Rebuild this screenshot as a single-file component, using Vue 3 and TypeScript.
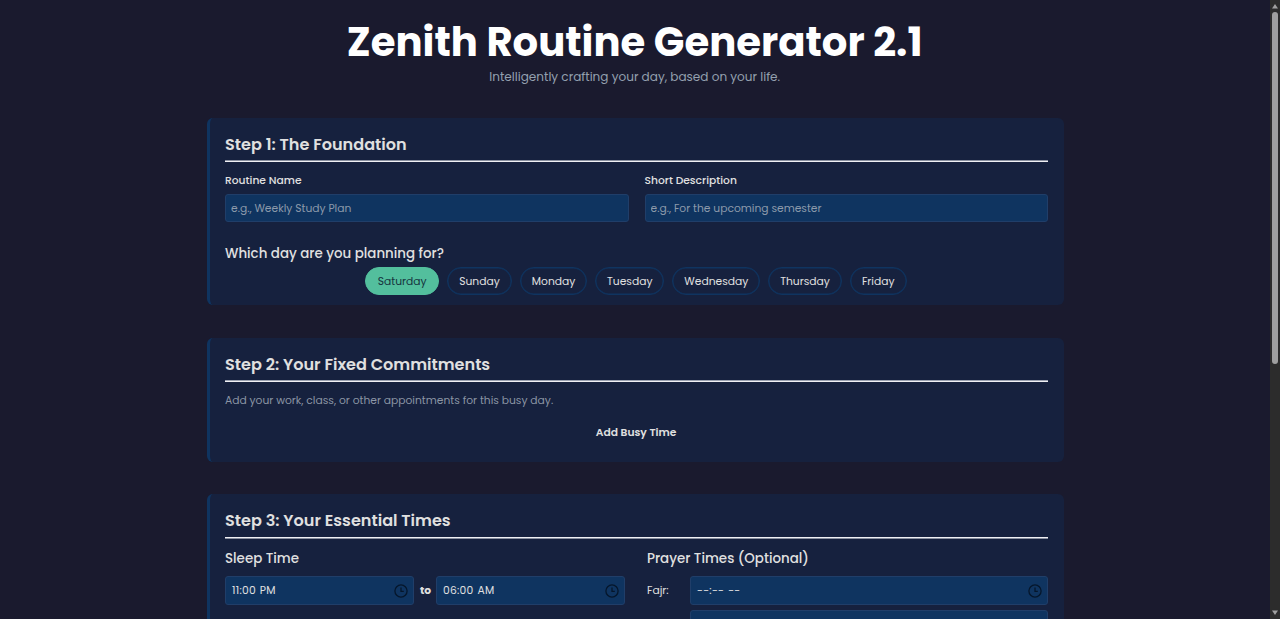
<script setup lang="ts">
import { ref } from 'vue'

interface Day {
  name: string
  width: number
}

const days: Day[] = [
  { name: 'Saturday', width: 73.5 },
  { name: 'Sunday', width: 64.8 },
  { name: 'Monday', width: 67.3 },
  { name: 'Tuesday', width: 68.9 },
  { name: 'Wednesday', width: 88 },
  { name: 'Thursday', width: 73.3 },
  { name: 'Friday', width: 57 },
]
const selected = ref('Saturday')
const routineName = ref('')
const description = ref('')
</script>

<template>
  <div class="window">
    <main class="page">
      <header class="hero">
        <h1>Zenith Routine Generator 2.1</h1>
        <p>Intelligently crafting your day, based on your life.</p>
      </header>

      <section class="card card-foundation">
        <h2>Step 1: The Foundation</h2>
        <div class="fields">
          <label class="field">
            <span class="label">Routine Name</span>
            <input v-model="routineName" placeholder="e.g., Weekly Study Plan" />
          </label>
          <label class="field">
            <span class="label">Short Description</span>
            <input v-model="description" placeholder="e.g., For the upcoming semester" />
          </label>
        </div>
        <h3 class="question">Which day are you planning for?</h3>
        <div class="days">
          <button
            v-for="day in days"
            :key="day.name"
            class="day"
            :class="{ active: day.name === selected }"
            :style="{ width: day.width + 'px' }"
            @click="selected = day.name"
          >{{ day.name }}</button>
        </div>
      </section>

      <section class="card card-busy">
        <h2>Step 2: Your Fixed Commitments</h2>
        <p class="hint">Add your work, class, or other appointments for this busy day.</p>
        <button class="add">Add Busy Time</button>
      </section>

      <section class="card card-times">
        <h2>Step 3: Your Essential Times</h2>
        <div class="times">
          <div class="sleep">
            <h3>Sleep Time</h3>
            <div class="range">
              <div class="time"><span>11:00 PM</span><svg class="clock" viewBox="0 0 14 14"><circle cx="7" cy="7" r="6.1" /><path d="M7 3.4V7.4H9.8" /></svg></div>
              <strong>to</strong>
              <div class="time"><span>06:00 AM</span><svg class="clock" viewBox="0 0 14 14"><circle cx="7" cy="7" r="6.1" /><path d="M7 3.4V7.4H9.8" /></svg></div>
            </div>
          </div>
          <div class="prayer">
            <h3>Prayer Times (Optional)</h3>
            <div class="prayer-row">
              <span class="prayer-name">Fajr:</span>
              <div class="time"><span>--:-- --</span><svg class="clock" viewBox="0 0 14 14"><circle cx="7" cy="7" r="6.1" /><path d="M7 3.4V7.4H9.8" /></svg></div>
            </div>
            <div class="prayer-row">
              <span class="prayer-name"></span>
              <div class="time"></div>
            </div>
          </div>
        </div>
      </section>
    </main>
    <aside class="scrollbar">
      <svg viewBox="0 0 10 12"><path d="M5 4L8 8.5H2Z" /></svg>
      <div class="thumb"></div>
      <svg class="down" viewBox="0 0 10 12"><path d="M5 8L8 3.5H2Z" /></svg>
    </aside>
  </div>
</template>

<style>
html,
body {
  margin: 0;
  background: #1a1a2e;
  overflow: hidden;
}
</style>

<style scoped>
* {
  box-sizing: border-box;
}
.window {
  display: flex;
  height: 619px;
  overflow: hidden;
  background: #1a1a2e;
  color: #e0e0e0;
  font-family: Poppins, Inter, sans-serif;
  font-size: 10.72px;
  white-space: nowrap;
}
.page {
  width: 1270px;
  padding: 0 206px 0 207px;
}
h1,
h2,
h3,
p {
  margin: 0;
}
.hero {
  height: 118px;
  padding: 17px 1.6px 0 0;
  text-align: center;
}
h1 {
  height: 50px;
  line-height: 50px;
  font-size: 40.2px;
  font-weight: 700;
  color: #fff;
}
.hero p {
  height: 18px;
  line-height: 20px;
  font-size: 12.06px;
  color: #94a0af;
}
.card {
  border-left: 3px solid #0f3460;
  border-radius: 6px;
  background: #16213e;
  padding: 16px 16px 0 15px;
}
.card-foundation {
  height: 187px;
  margin-bottom: 33px;
}
.card-busy {
  height: 124px;
  margin-bottom: 32px;
}
.card-times {
  height: 250px;
}
h2 {
  height: 28px;
  line-height: 22px;
  border-bottom: 1px solid #f0f0f4;
  font-size: 16.08px;
  font-weight: 600;
}
.card-foundation h2 {
  box-shadow: 0 -1px #8990a0 inset;
}
.card-busy h2 {
  box-shadow: 0 -1px #9ba2b1 inset;
}
.card-times h2 {
  box-shadow: 0 1px #8990a0;
}
.fields {
  display: grid;
  grid-template-columns: 1fr 1fr;
  gap: 16px;
  margin-top: 10px;
}
.field {
  display: flex;
  flex-direction: column;
}
.label {
  height: 22px;
  line-height: 17px;
  font-weight: 500;
}
input {
  width: 100%;
  height: 28px;
  padding: 1px 5px 0;
  border: 1px solid #203e69;
  border-radius: 3px;
  outline: none;
  background: #0f3460;
  color: #e0e0e0;
  font: 10.72px Poppins, Inter, sans-serif;
}
input::placeholder {
  color: #8c9aab;
  opacity: 1;
}
h3 {
  font-size: 13.4px;
  font-weight: 500;
}
.question {
  height: 22px;
  margin-top: 22px;
  line-height: 20px;
}
.days {
  display: flex;
  justify-content: center;
  gap: 8.1px;
  margin-top: 1px;
  padding-right: 0.8px;
}
.day {
  height: 28.4px;
  padding: 1px 0 0;
  border: 1px solid #0f3460;
  border-radius: 15px;
  box-shadow: inset 0 0 0 0.5px #0f3460;
  background: transparent;
  color: #e0e0e0;
  font: 10.72px Poppins, Inter, sans-serif;
}
.day.active {
  border-color: #53bf9d;
  box-shadow: none;
  background: #53bf9d;
  color: #16343e;
}
.hint {
  margin-top: 10px;
  line-height: 17px;
  color: #8b95a4;
}
.add {
  display: block;
  height: 28px;
  margin: 10px auto 0;
  padding: 0 0.8px 0 0;
  border: 0;
  background: transparent;
  color: #e0e0e0;
  font: 600 10.72px Poppins, Inter, sans-serif;
}
.times {
  display: grid;
  grid-template-columns: 400px 401px;
  gap: 22px;
  margin-top: 11px;
}
.times h3 {
  height: 27px;
  line-height: 20px;
}
.range {
  display: flex;
  align-items: center;
}
.time {
  display: flex;
  flex: 1;
  align-items: center;
  justify-content: space-between;
  height: 29.4px;
  padding: 0 5.5px 0 6px;
  border: 1px solid #203e69;
  border-radius: 3px;
  background: #0f3460;
  letter-spacing: 0.26px;
  word-spacing: 0.8px;
}
.range strong {
  width: 22px;
  padding-left: 1px;
  text-align: center;
  font-weight: 700;
}
.clock {
  width: 14px;
  height: 14px;
  fill: none;
  stroke: #05162b;
  stroke-width: 1.3;
}
.prayer-row {
  display: flex;
  align-items: center;
  margin-bottom: 5px;
}
.prayer-name {
  width: 43px;
}
.scrollbar {
  display: flex;
  flex-direction: column;
  width: 10px;
  height: 619px;
  background: #2c2c2c;
}
.scrollbar svg {
  width: 10px;
  height: 12px;
  fill: #9f9f9f;
}
.thumb {
  width: 6px;
  height: 352px;
  margin-left: 2px;
  border-radius: 3px;
  background: #9f9f9f;
}
.scrollbar .down {
  margin-top: auto;
}
</style>
